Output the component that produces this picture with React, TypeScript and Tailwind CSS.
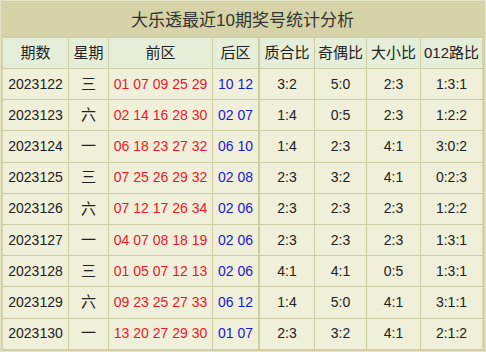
const rows = [
  ['2023122', '三', '01 07 09 25 29', '10 12', '3:2', '5:0', '2:3', '1:3:1'],
  ['2023123', '六', '02 14 16 28 30', '02 07', '1:4', '0:5', '2:3', '1:2:2'],
  ['2023124', '一', '06 18 23 27 32', '06 10', '1:4', '2:3', '4:1', '3:0:2'],
  ['2023125', '三', '07 25 26 29 32', '02 08', '2:3', '3:2', '4:1', '0:2:3'],
  ['2023126', '六', '07 12 17 26 34', '02 06', '2:3', '2:3', '2:3', '1:2:2'],
  ['2023127', '一', '04 07 08 18 19', '02 06', '2:3', '2:3', '2:3', '1:3:1'],
  ['2023128', '三', '01 05 07 12 13', '02 06', '4:1', '4:1', '0:5', '1:3:1'],
  ['2023129', '六', '09 23 25 27 33', '06 12', '1:4', '5:0', '4:1', '3:1:1'],
  ['2023130', '一', '13 20 27 29 30', '01 07', '2:3', '3:2', '4:1', '2:1:2'],
];

const heads = ['期数', '星期', '前区', '后区', '质合比', '奇偶比', '大小比', '012路比'];

export default function App() {
  return (
    <div
      className="w-[486px] h-[352px] bg-[#d5d3a7] border border-[#e4e3c8] pt-[2px] pl-[2px] pr-[3px] text-[#222]"
      style={{ fontFamily: '"Liberation Sans", Arial, "Noto Sans CJK SC", sans-serif' }}
    >
      {/* title */}
      <div className="h-[34px] pt-px flex items-center justify-center text-[17px] text-[#333]">
        大乐透最近10期奖号统计分析
      </div>

      {/* table */}
      <div className="grid grid-cols-[65px_39px_103px_45px_55px_51px_53px_61px] gap-px bg-[#cdcca3] pt-px pb-px text-[14px]">
        {heads.map((h, i) => (
          <div
            key={h}
            className={`h-[30px] flex items-center justify-center bg-[#e5eed9] text-[15px] ${i === 4 ? 'border-l border-[#cdcca3]' : ''}`}
          >
            {h}
          </div>
        ))}
        {rows.map((r) =>
          r.map((c, i) => (
            <div
              key={r[0] + i}
              className={`h-[30.2px] flex items-center justify-center bg-[#f0efd9] ${
                i === 2 ? 'text-[#e8192c]' : i === 3 ? 'text-[#1a1ad0]' : ''
              } ${i === 1 ? 'text-[15px]' : ''} ${i === 4 ? 'border-l border-[#cdcca3]' : ''}`}
            >
              {c}
            </div>
          ))
        )}
      </div>
    </div>
  );
}
